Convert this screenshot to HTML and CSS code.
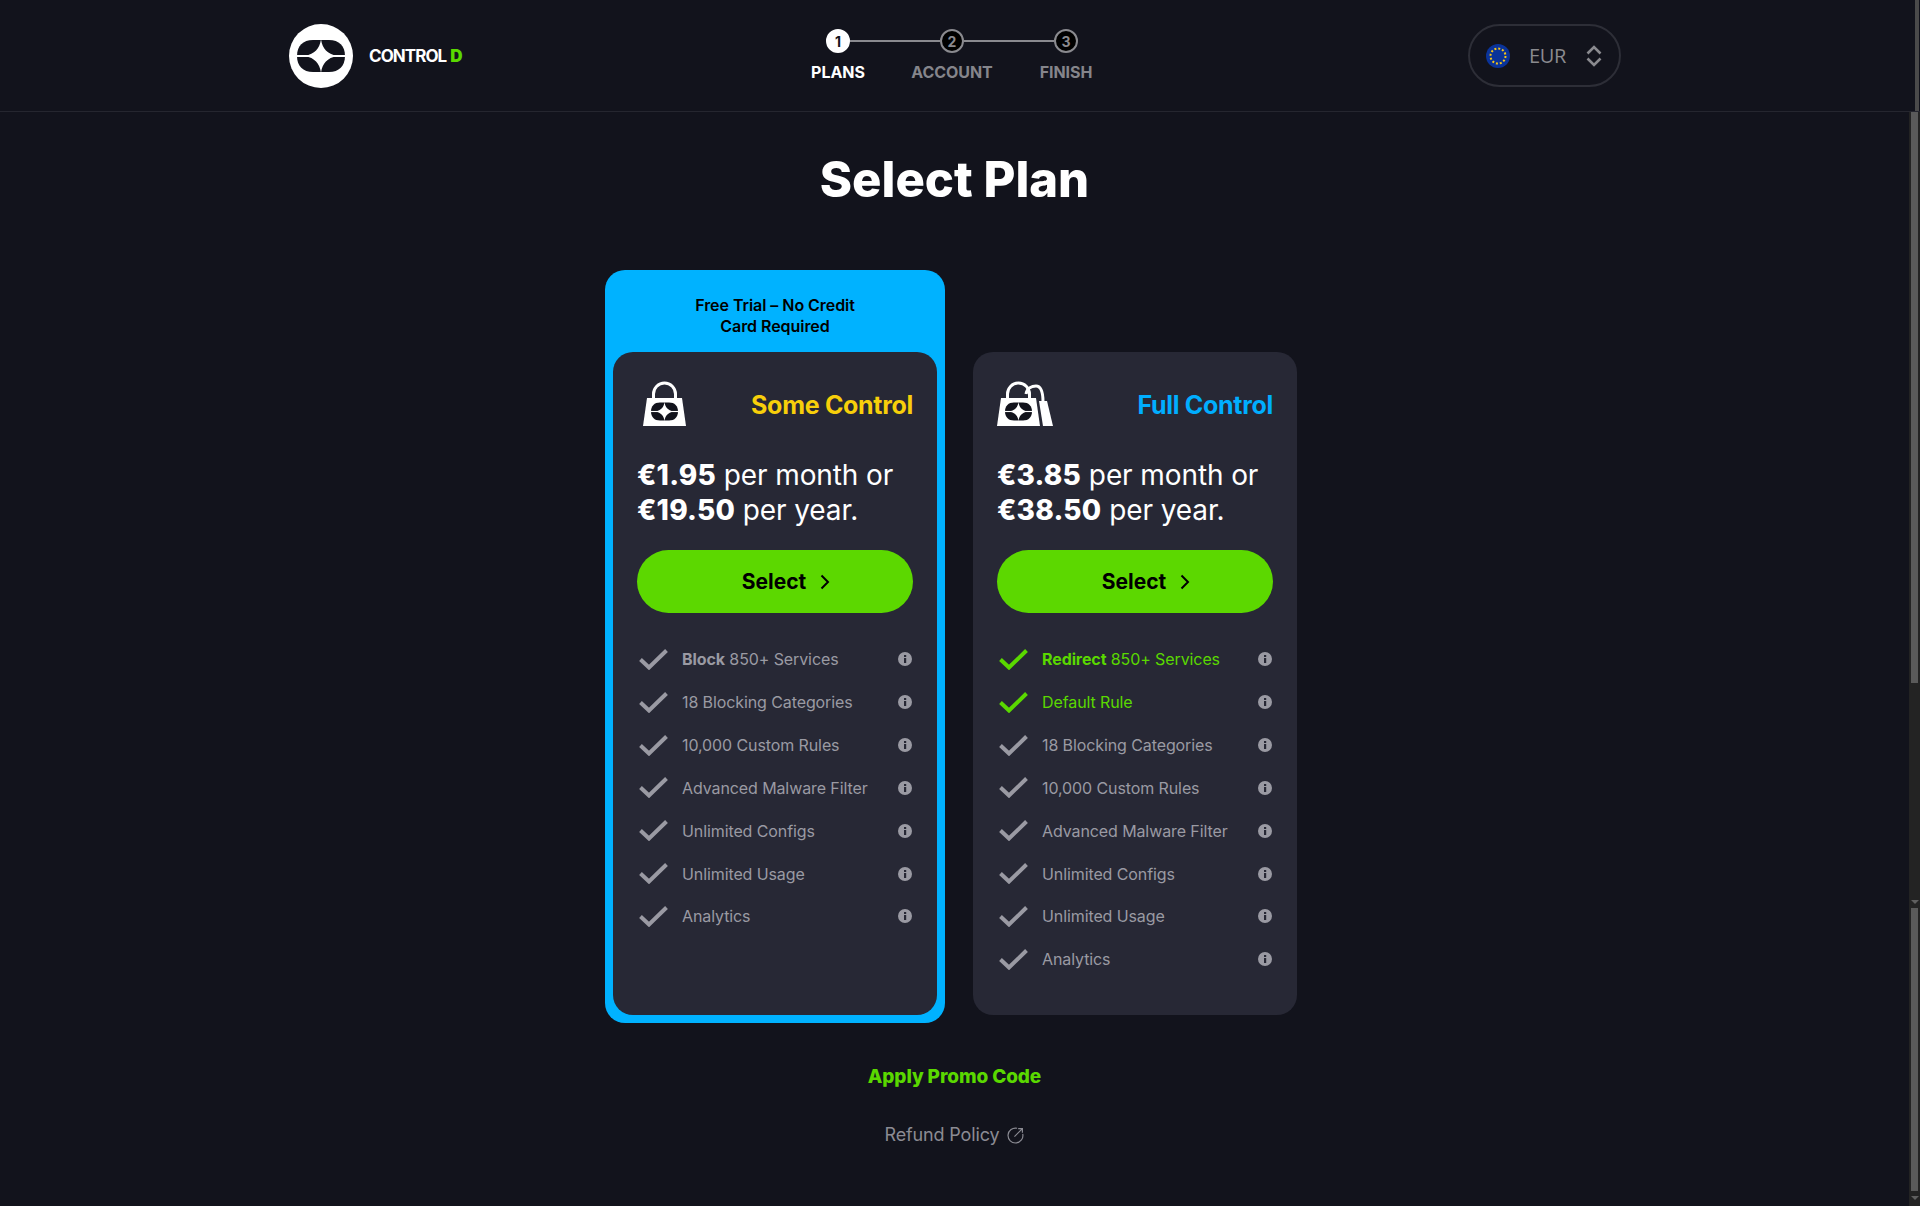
FILE: index.html
```html
<!DOCTYPE html>
<html lang="en">
<head>
    <meta charset="UTF-8">
    <meta name="viewport" content="width=device-width, initial-scale=1.0">
    <title>Select Plan - Control D</title>
    <link rel="stylesheet" href="styles.css">
</head>
<body>
    <svg class="defs" width="0" height="0" aria-hidden="true">
        <symbol id="mark" viewBox="0 0 48 32">
            <path class="mark-hole" d="M0 16C0 6 6 0 16 0H32C42 0 48 6 48 16C48 26 42 32 32 32H16C6 32 0 26 0 16Z"/>
            <rect class="mark-solid" x="0" y="15" width="48" height="2"/>
            <path class="mark-solid" d="M24 -1C25 8 30 14 40 16C30 18 25 24 24 33C23 24 18 18 8 16C18 14 23 8 24 -1Z"/>
        </symbol>
        <symbol id="bag" viewBox="0 0 43 45">
            <path class="bag-handle" d="M10.5 19V13A11 11 0 0 1 32.5 13V19"/>
            <path class="bag-body" d="M4 17H39L43 45H0Z"/>
            <use href="#mark" x="8" y="21" width="27" height="19"/>
        </symbol>
        <symbol id="bags" viewBox="0 0 56 45">
            <path class="bag-handle" d="M29 13C30 7 35 5 39 5C43 5 46 9 46 21"/>
            <path class="bag-body" d="M42 20H50L56 45H46Z"/>
            <use href="#bag" x="0" y="0" width="43" height="45"/>
        </symbol>
        <symbol id="check" viewBox="0 0 29 21">
            <path d="M1.5 10.5L10 18.5L27.5 1.5" fill="none" stroke="currentColor" stroke-width="4"/>
        </symbol>
        <symbol id="info" viewBox="0 0 14 14">
            <circle cx="7" cy="7" r="7" fill="#9a9aa3"/>
            <rect x="6" y="6" width="2.2" height="5" fill="#272835"/>
            <rect x="6" y="3" width="2.2" height="2" fill="#272835"/>
        </symbol>
    </svg>

    <div class="overlay-bar"></div>

    <header class="topbar">
        <div class="topbar-inner">
            <a class="brand" href="#">
                <svg class="brand-mark" viewBox="0 0 64 64">
                    <circle cx="32" cy="32" r="32" fill="#fff"/>
                    <use href="#mark" x="8" y="16" width="48" height="32"/>
                </svg>
                <span class="brand-name">CONTROL<b>D</b></span>
            </a>

            <div class="steps">
                <div class="step-track">
                    <span class="step-dot active">1</span>
                    <span class="step-line"></span>
                    <span class="step-dot">2</span>
                    <span class="step-line"></span>
                    <span class="step-dot">3</span>
                </div>
                <div class="step-labels">
                    <span class="active">PLANS</span>
                    <span>ACCOUNT</span>
                    <span>FINISH</span>
                </div>
            </div>

            <button class="currency" type="button">
                <svg class="flag" viewBox="0 0 24 24">
                    <circle cx="12" cy="12" r="12" fill="#0a3399"/>
                    <circle cx="12" cy="12" r="7.5" fill="none" stroke="#f5c518" stroke-width="2" stroke-dasharray="2 1.93"/>
                </svg>
                <span class="currency-code">EUR</span>
                <svg class="updown" viewBox="0 0 16 22">
                    <path d="M1.5 8.5L8 2L14.5 8.5M1.5 13.5L8 20L14.5 13.5" fill="none" stroke="#8a8a8f" stroke-width="2.6"/>
                </svg>
            </button>
        </div>
    </header>

    <div class="body-row">
        <main class="content">
            <h1 class="title">Select Plan</h1>

            <div class="plans">
                <div class="trial">
                    <p class="trial-note">Free Trial – No Credit<br>Card Required</p>
                    <section class="plan">
                        <div class="plan-head">
                            <svg class="bag-one"><use href="#bag"/></svg>
                            <h2 class="plan-name some">Some Control</h2>
                        </div>
                        <p class="price"><strong>€1.95</strong> per month or<br><strong>€19.50</strong> per year.</p>
                        <a class="select" href="#">Select
                            <svg viewBox="0 0 10 16"><path d="M1.5 1.5L8 8L1.5 14.5" fill="none" stroke="#000" stroke-width="2"/></svg>
                        </a>
                        <ul class="features">
                            <li><svg class="tick"><use href="#check"/></svg><span><b>Block</b> 850+ Services</span><svg class="info"><use href="#info"/></svg></li>
                            <li><svg class="tick"><use href="#check"/></svg><span>18 Blocking Categories</span><svg class="info"><use href="#info"/></svg></li>
                            <li><svg class="tick"><use href="#check"/></svg><span>10,000 Custom Rules</span><svg class="info"><use href="#info"/></svg></li>
                            <li><svg class="tick"><use href="#check"/></svg><span>Advanced Malware Filter</span><svg class="info"><use href="#info"/></svg></li>
                            <li><svg class="tick"><use href="#check"/></svg><span>Unlimited Configs</span><svg class="info"><use href="#info"/></svg></li>
                            <li><svg class="tick"><use href="#check"/></svg><span>Unlimited Usage</span><svg class="info"><use href="#info"/></svg></li>
                            <li><svg class="tick"><use href="#check"/></svg><span>Analytics</span><svg class="info"><use href="#info"/></svg></li>
                        </ul>
                    </section>
                </div>

                <section class="plan plan-side">
                    <div class="plan-head">
                        <svg class="bag-two"><use href="#bags"/></svg>
                        <h2 class="plan-name full">Full Control</h2>
                    </div>
                    <p class="price"><strong>€3.85</strong> per month or<br><strong>€38.50</strong> per year.</p>
                    <a class="select" href="#">Select
                        <svg viewBox="0 0 10 16"><path d="M1.5 1.5L8 8L1.5 14.5" fill="none" stroke="#000" stroke-width="2"/></svg>
                    </a>
                    <ul class="features">
                        <li class="extra"><svg class="tick"><use href="#check"/></svg><span><b>Redirect</b> 850+ Services</span><svg class="info"><use href="#info"/></svg></li>
                        <li class="extra"><svg class="tick"><use href="#check"/></svg><span>Default Rule</span><svg class="info"><use href="#info"/></svg></li>
                        <li><svg class="tick"><use href="#check"/></svg><span>18 Blocking Categories</span><svg class="info"><use href="#info"/></svg></li>
                        <li><svg class="tick"><use href="#check"/></svg><span>10,000 Custom Rules</span><svg class="info"><use href="#info"/></svg></li>
                        <li><svg class="tick"><use href="#check"/></svg><span>Advanced Malware Filter</span><svg class="info"><use href="#info"/></svg></li>
                        <li><svg class="tick"><use href="#check"/></svg><span>Unlimited Configs</span><svg class="info"><use href="#info"/></svg></li>
                        <li><svg class="tick"><use href="#check"/></svg><span>Unlimited Usage</span><svg class="info"><use href="#info"/></svg></li>
                        <li><svg class="tick"><use href="#check"/></svg><span>Analytics</span><svg class="info"><use href="#info"/></svg></li>
                    </ul>
                </section>
            </div>

            <a class="promo" href="#">Apply Promo Code</a>
            <a class="refund" href="#">Refund Policy
                <svg viewBox="0 0 16 16"><path d="M9.5 1.2A7 7 0 1 0 14.8 6.5M7 9L14.5 1.5M10.5 1.5H14.5V5.5" fill="none" stroke="#8b8b93" stroke-width="1.1"/></svg>
            </a>
        </main>

        <aside class="scrollbar">
            <span class="thumb thumb-top"></span>
            <span class="arrow"></span>
            <span class="thumb thumb-bottom"></span>
            <span class="arrow"></span>
        </aside>
    </div>
</body>
</html>
```

FILE: styles.css
```css
* {
    box-sizing: border-box;
}
html, body {
    height: 1206px;
    overflow: hidden;
}
body {
    margin: 0;
    background-color: #12131c;
    color: #fff;
    font-family: Inter, "Liberation Sans", sans-serif;
    position: relative;
}
a {
    text-decoration: none;
    color: inherit;
}
.defs {
    position: absolute;
}
.mark-hole {
    fill: #12131c;
}
.mark-solid {
    fill: #fff;
}
.bag-handle {
    fill: none;
    stroke: #fff;
    stroke-width: 3;
}
.bag-body {
    fill: #fff;
}
.overlay-bar {
    position: absolute;
    top: 0;
    right: 1px;
    width: 4px;
    height: 111px;
    background-color: #4a4a4a;
}

/* top bar */
.topbar {
    height: 112px;
    border-bottom: 1px solid #25262f;
    padding-left: 289px;
}
.topbar-inner {
    width: 1332px;
    height: 111px;
    display: grid;
    grid-template-columns: 1fr auto 1fr;
    align-items: center;
}
.brand {
    display: flex;
    align-items: center;
    gap: 16px;
}
.brand-mark {
    width: 64px;
    height: 64px;
}
.brand-name {
    font-size: 17px;
    font-weight: 700;
    letter-spacing: -0.95px;
    color: #fff;
}
.brand-name b {
    color: #5ad800;
    margin-left: 4px;
}
.steps {
    margin-right: 6px;
    display: flex;
    flex-direction: column;
    align-items: center;
    gap: 9px;
}
.step-track {
    width: 252px;
    display: flex;
    align-items: center;
}
.step-line {
    flex: 1;
    height: 2px;
    background-color: #8a8a8f;
}
.step-dot {
    width: 24px;
    height: 24px;
    border-radius: 50%;
    border: 2px solid #8a8a8f;
    background-color: #000;
    color: #8a8a8f;
    font-size: 14px;
    font-weight: 700;
    display: flex;
    align-items: center;
    justify-content: center;
}
.step-dot.active {
    background-color: #fff;
    border-color: #fff;
    color: #12131c;
}
.step-labels {
    display: grid;
    grid-template-columns: repeat(3, 114px);
    justify-items: center;
    font-size: 16px;
    font-weight: 700;
    letter-spacing: -0.05px;
    color: #85858b;
}
.step-labels .active {
    color: #fff;
}
.currency {
    justify-self: end;
    width: 153px;
    height: 63px;
    border: 2px solid #2d2e37;
    border-radius: 32px;
    background: none;
    padding: 0 16px;
    display: flex;
    align-items: center;
}
.flag {
    width: 24px;
    height: 24px;
}
.currency-code {
    margin-left: 19px;
    font-family: "Open Sans", sans-serif;
    font-size: 20px;
    color: #8a8a8f;
    letter-spacing: -0.3px;
}
.updown {
    margin-left: 20px;
    width: 16px;
    height: 22px;
}

/* main column */
.body-row {
    display: flex;
    height: 1094px;
}
.content {
    flex: 1;
    display: flex;
    flex-direction: column;
    align-items: center;
}
.title {
    margin: 36px 0 0;
    font-size: 49px;
    line-height: 64px;
    font-weight: 800;
    letter-spacing: 0;
}
.plans {
    margin-top: 58px;
    padding-right: 7px;
    display: flex;
    align-items: flex-end;
    gap: 28px;
}
.trial {
    background-color: #00b2ff;
    border-radius: 20px;
    padding: 0 8px 8px;
}
.trial-note {
    margin: 0;
    height: 82px;
    padding-top: 25px;
    text-align: center;
    color: #000;
    font-size: 16px;
    line-height: 21px;
    font-weight: 600;
    letter-spacing: -0.05px;
}
.plan {
    width: 324px;
    height: 663px;
    background-color: #272835;
    border-radius: 20px;
    padding: 29px 24px 0;
}
.plan-side {
    margin-bottom: 8px;
}
.plan-head {
    height: 48px;
    display: flex;
    align-items: center;
    justify-content: space-between;
}
.bag-one {
    width: 43px;
    height: 45px;
    margin-left: 6px;
    margin-top: -4px;
}
.bag-two {
    width: 56px;
    height: 45px;
    margin-top: -4px;
}
.plan-name {
    margin: 0;
    font-size: 25px;
    font-weight: 700;
    letter-spacing: -0.3px;
}
.plan-name.some {
    color: #f7cf0a;
}
.plan-name.full {
    color: #00aeff;
}
.price {
    margin: 29px 0 0;
    font-size: 28px;
    line-height: 35px;
    font-weight: 400;
    letter-spacing: -0.1px;
}
.price strong {
    font-weight: 800;
    letter-spacing: 0.2px;
}
.select {
    margin-top: 22px;
    height: 63px;
    padding-left: 22px;
    border-radius: 32px;
    background-color: #5cd800;
    color: #000;
    font-size: 21px;
    font-weight: 700;
    display: flex;
    align-items: center;
    justify-content: center;
    gap: 14px;
}
.select svg {
    width: 10px;
    height: 16px;
}
.features {
    list-style: none;
    margin: 25px 0 0;
    padding: 0;
}
.features li {
    height: 42.85px;
    display: flex;
    align-items: center;
    color: #9a9aa3;
    font-size: 16px;
    letter-spacing: -0.1px;
}
.features li span {
    flex: 1;
    margin-left: 14px;
}
.features li b {
    font-weight: 700;
}
.features li.extra {
    color: #5ad800;
}
.tick {
    width: 29px;
    height: 21px;
    margin-left: 2px;
}
.info {
    width: 14px;
    height: 14px;
    margin-right: 1px;
}
.promo {
    margin-top: 41px;
    font-size: 19px;
    line-height: 26px;
    font-weight: 800;
    letter-spacing: -0.1px;
    color: #5ad800;
}
.refund {
    margin-top: 33px;
    font-size: 18px;
    line-height: 24px;
    color: #8b8b93;
    letter-spacing: -0.15px;
    display: flex;
    align-items: center;
    gap: 8px;
}
.refund svg {
    width: 17px;
    height: 17px;
}

/* fake scrollbar, it is part of the screenshot */
.scrollbar {
    width: 11px;
    background-color: #232323;
    display: flex;
    flex-direction: column;
    align-items: center;
}
.thumb {
    width: 7px;
    background-color: #5a5a5a;
}
.thumb-top {
    height: 571px;
}
.thumb-bottom {
    height: 283px;
    margin-top: 4px;
}
.arrow {
    width: 0;
    height: 0;
    margin-top: 5px;
    border-left: 4px solid transparent;
    border-right: 4px solid transparent;
    border-top: 4px solid #5f5f5f;
}
.thumb-top + .arrow {
    margin-top: 217px;
}
```
